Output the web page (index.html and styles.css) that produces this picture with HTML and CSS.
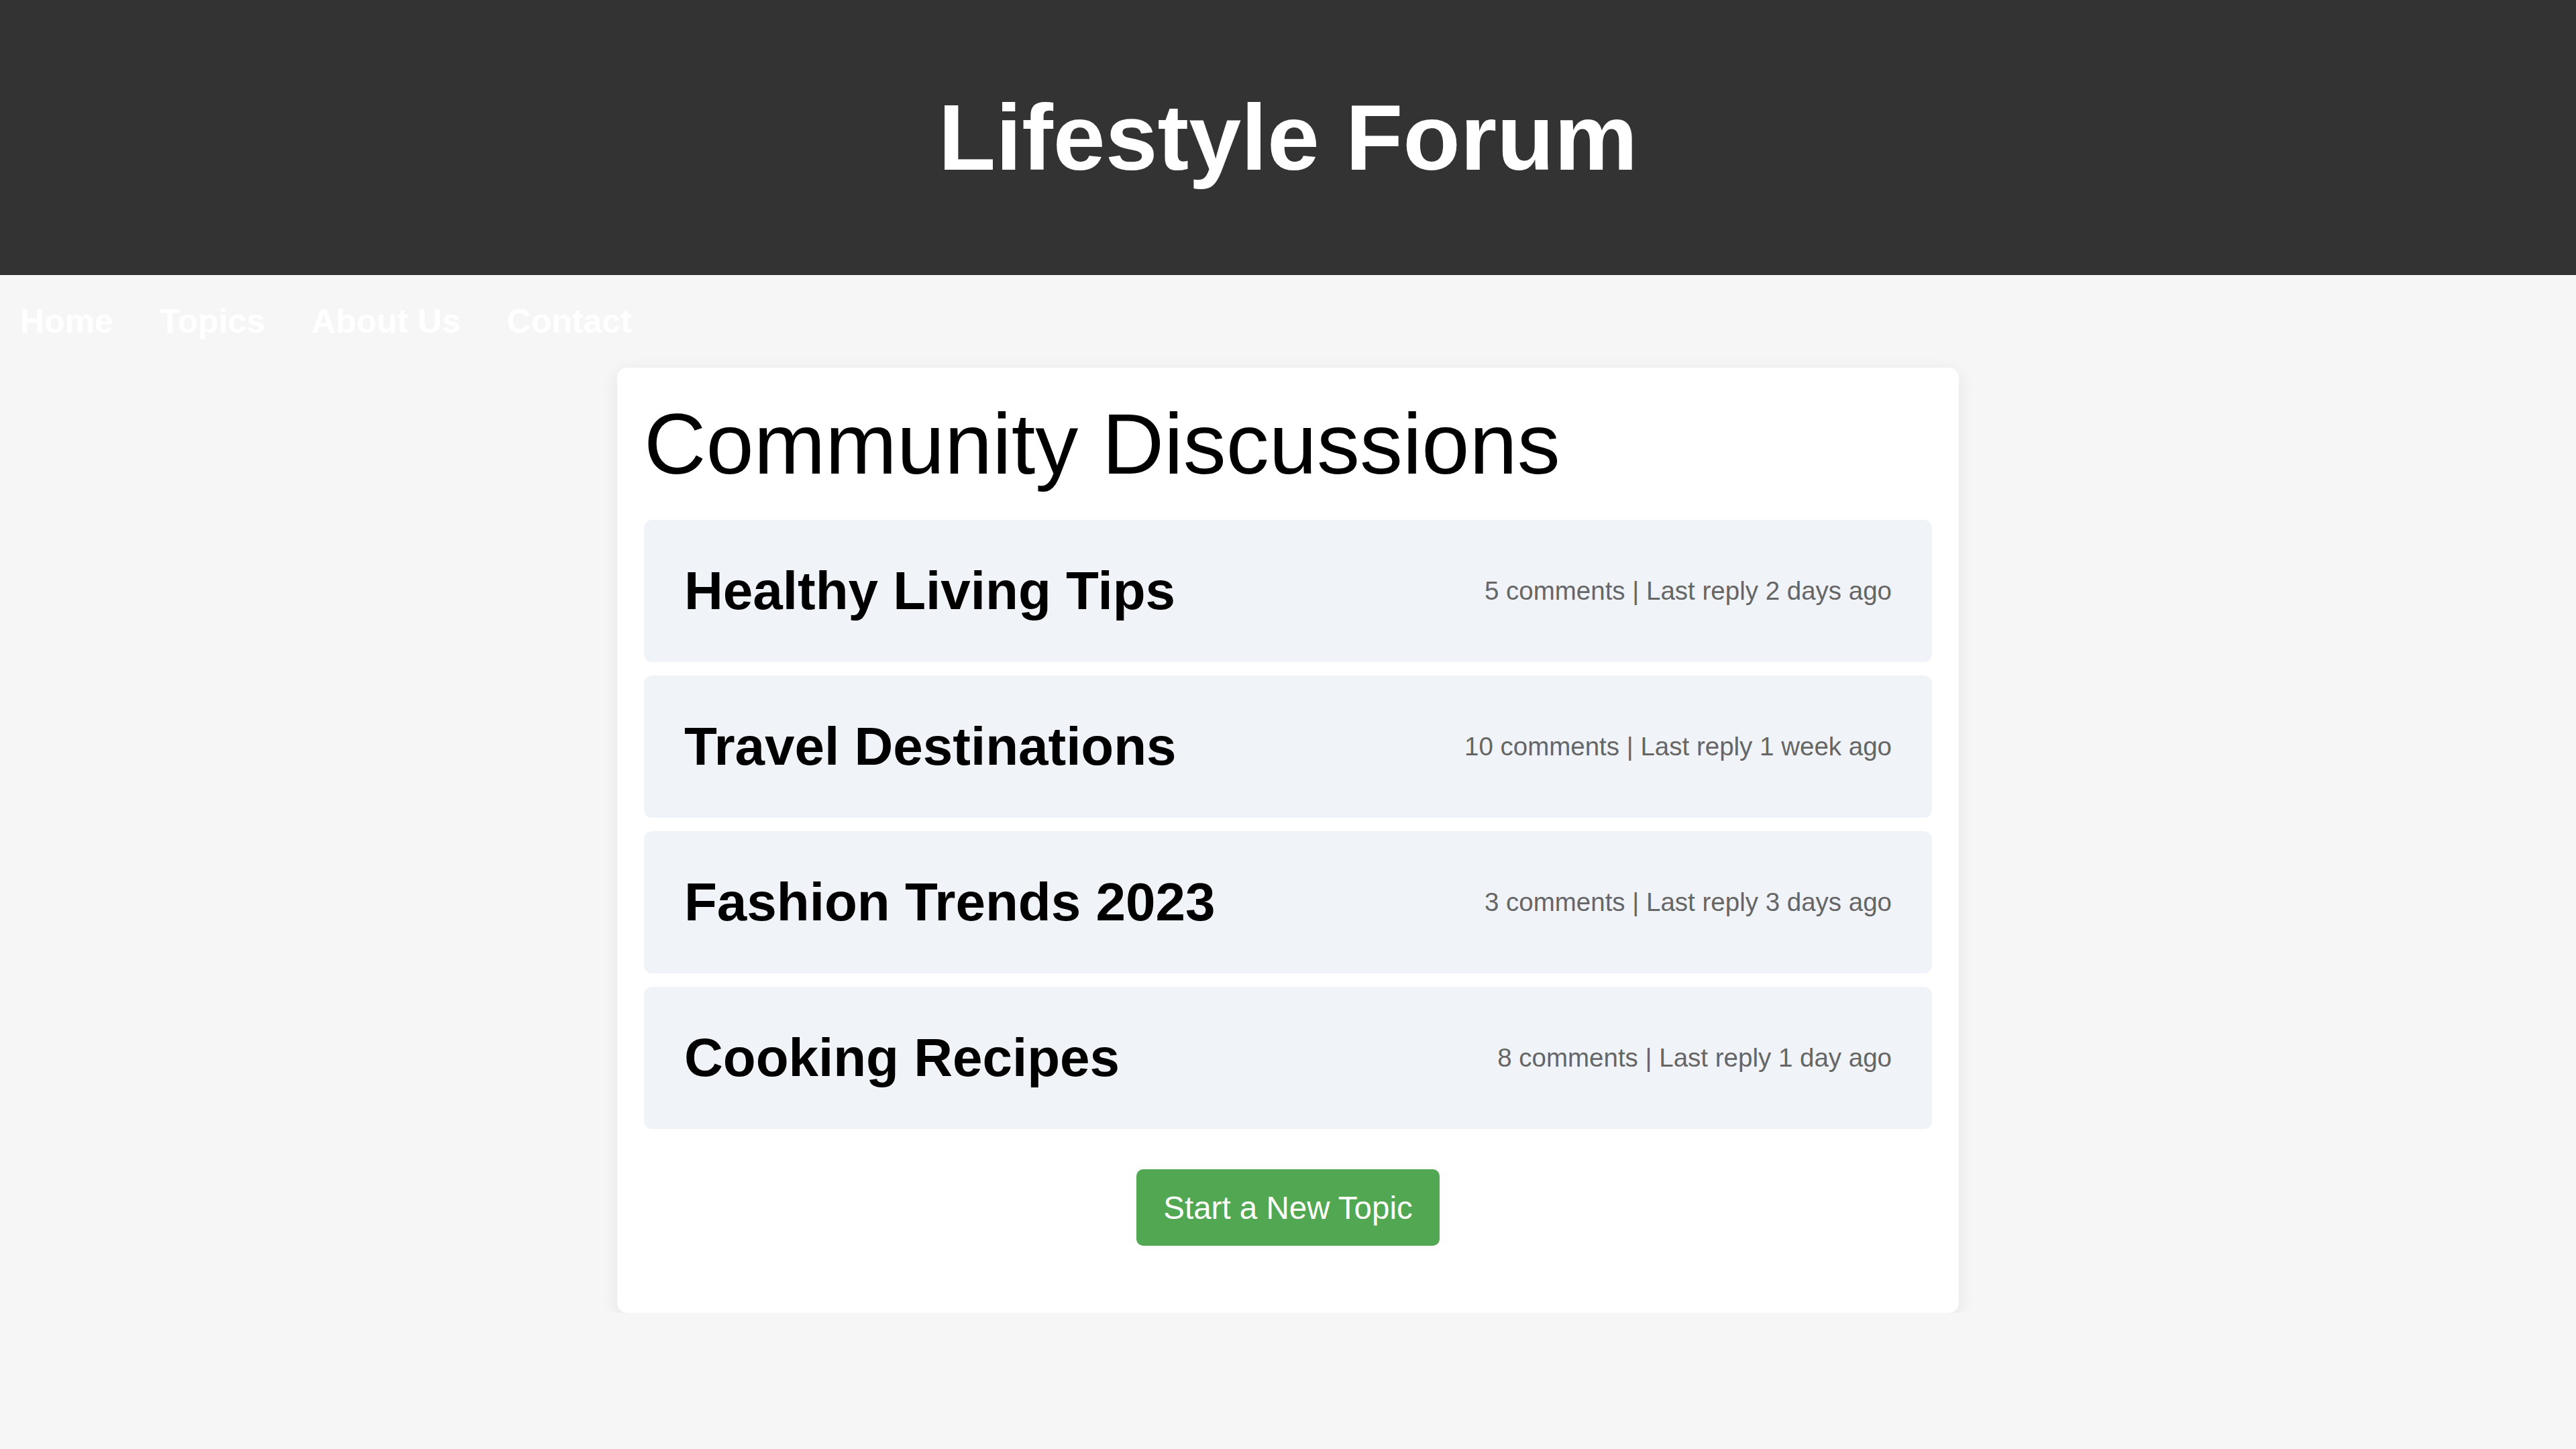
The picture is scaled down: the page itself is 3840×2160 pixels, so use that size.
FILE: index.html
```html
<!DOCTYPE html>
<html lang="en">
<head>
<meta charset="utf-8">
<title>Lifestyle Forum</title>
<link rel="stylesheet" href="styles.css">
</head>
<body>
<header class="site-header">
  <h1 class="site-title">Lifestyle Forum</h1>
</header>
<nav class="site-nav">
  <a class="nav-link" href="#">Home</a>
  <a class="nav-link" href="#">Topics</a>
  <a class="nav-link" href="#">About Us</a>
  <a class="nav-link" href="#">Contact</a>
</nav>
<main class="card">
  <h2 class="card-title">Community Discussions</h2>
  <div class="topic-list">
    <div class="topic">
      <h3 class="topic-title">Healthy Living Tips</h3>
      <span class="topic-meta">5 comments | Last reply 2 days ago</span>
    </div>
    <div class="topic">
      <h3 class="topic-title">Travel Destinations</h3>
      <span class="topic-meta">10 comments | Last reply 1 week ago</span>
    </div>
    <div class="topic">
      <h3 class="topic-title">Fashion Trends 2023</h3>
      <span class="topic-meta">3 comments | Last reply 3 days ago</span>
    </div>
    <div class="topic">
      <h3 class="topic-title">Cooking Recipes</h3>
      <span class="topic-meta">8 comments | Last reply 1 day ago</span>
    </div>
  </div>
  <div class="actions">
    <a class="btn" href="#">Start a New Topic</a>
  </div>
</main>
</body>
</html>
```
FILE: styles.css
```css
* { box-sizing: border-box; }

body {
  margin: 0;
  font-family: "Liberation Sans", Arial, Helvetica, sans-serif;
  background: #f6f6f6;
  color: #000;
}

.site-header {
  background: #333;
  color: #fff;
  text-align: center;
  padding: 124px 0;
}

.site-title {
  margin: 0;
  font-size: 140px;
  font-weight: bold;
}

.site-nav {
  display: flex;
  gap: 69px;
  padding: 40px 30px;
}

.nav-link {
  color: #fff;
  font-size: 50px;
  font-weight: bold;
  text-decoration: none;
}

.card {
  display: block;
  width: 2000px;
  margin: 0 auto;
  background: #fff;
  padding: 40px;
  border-radius: 15px;
  box-shadow: 0 5px 25px rgba(0, 0, 0, 0.08);
}

.card-title {
  margin: 0 0 40px;
  font-size: 128px;
  font-weight: normal;
}

.topic {
  display: flex;
  justify-content: space-between;
  align-items: center;
  background: #f0f3f8;
  padding: 60px;
  border-radius: 12px;
  margin-bottom: 20px;
}

.topic-title {
  margin: 0;
  font-size: 80px;
  font-weight: bold;
}

.topic-meta {
  font-size: 38.5px;
  color: #666;
}

.actions {
  text-align: center;
  margin: 60px 0;
}

.btn {
  display: inline-block;
  background: #52a752;
  color: #fff;
  font-size: 47.5px;
  padding: 29.5px 40px;
  border-radius: 10px;
  text-decoration: none;
}
```
